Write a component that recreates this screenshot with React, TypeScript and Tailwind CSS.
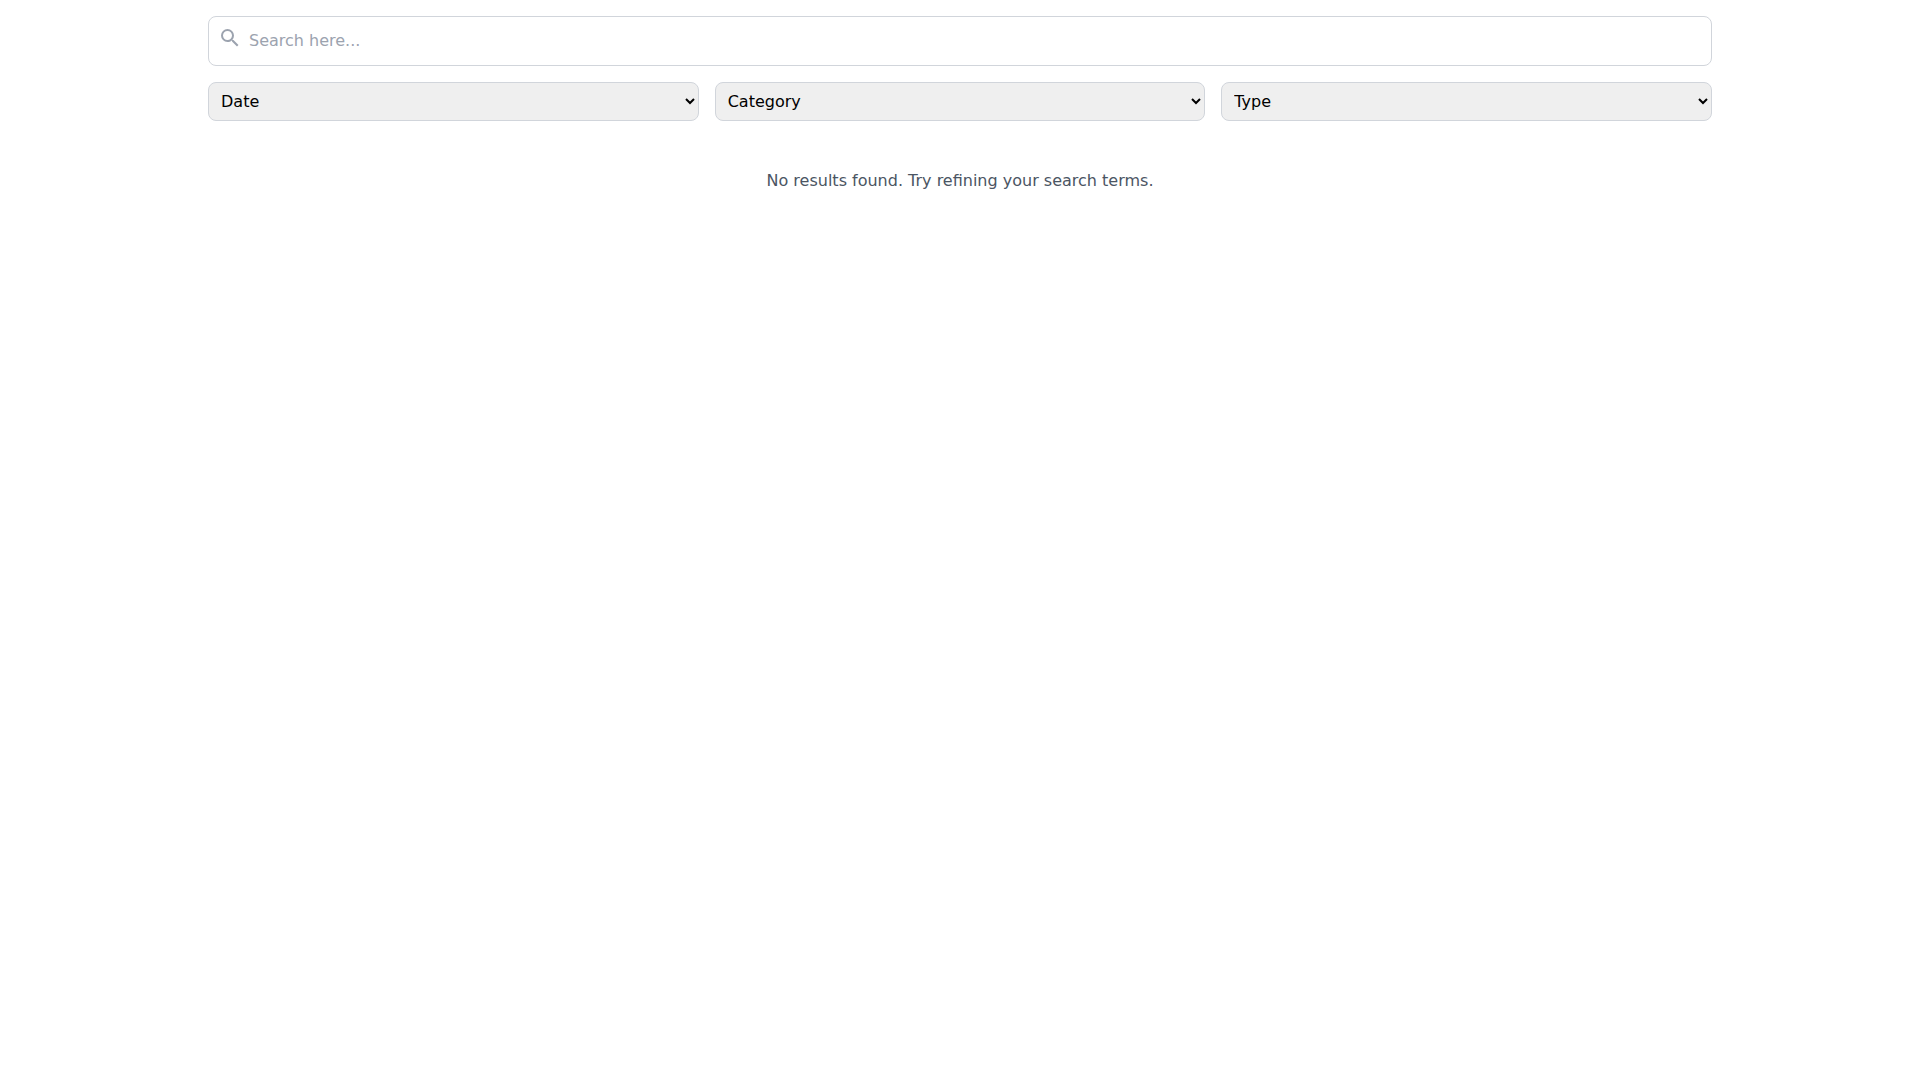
import { MdSearch } from 'react-icons/md';

const filtros = ['Date', 'Category', 'Type'];

export default function App() {
    return (
        <main className="min-h-screen bg-white font-['DejaVu_Sans',sans-serif]">
            <section className="w-[1504px] mx-auto pt-4">
                <div className="relative mb-4">
                    <MdSearch className="absolute left-[10px] top-[10px] text-[#9ca3af]" size={24} />
                    <input
                        type="text"
                        placeholder="Search here..."
                        className="w-full h-[50px] border border-[#d1d5db] rounded-lg pl-10 pr-3 pt-[11px] pb-[13px] text-base outline-none placeholder:text-[#9ca3af]"
                    />
                </div>

                <div className="grid grid-cols-3 gap-4">
                    {filtros.map((filtro) => (
                        <select
                            key={filtro}
                            className="h-[39px] border border-[#d1d5db] rounded-lg p-2 text-base text-black bg-[#efefef]"
                        >
                            <option>{filtro}</option>
                        </select>
                    ))}
                </div>

                <p className="mt-12 text-center text-base text-[#4b5563]">
                    No results found. Try refining your search terms.
                </p>
            </section>
        </main>
    );
}
